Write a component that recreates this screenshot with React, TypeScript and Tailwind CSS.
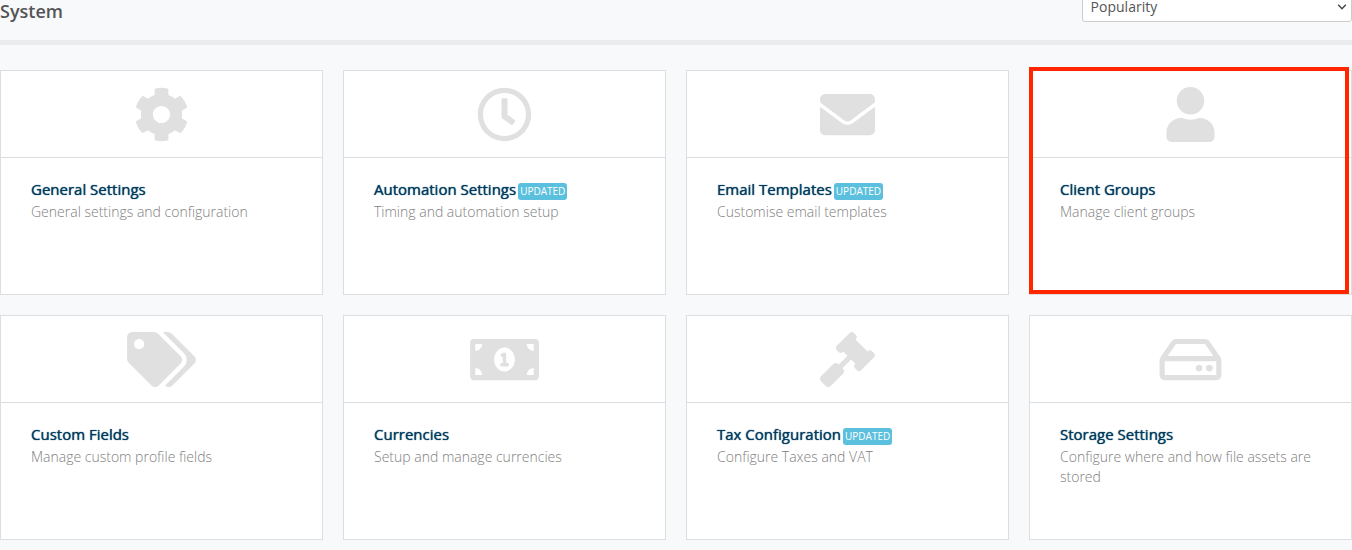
import { useState } from "react";
import type { IconType } from "react-icons";
import {
  FaCog,
  FaEnvelope,
  FaGavel,
  FaMoneyBillAlt,
  FaRegClock,
  FaRegHdd,
  FaTags,
  FaUser,
} from "react-icons/fa";

type Setting = {
  title: string;
  description: string;
  icon: IconType;
  updated?: boolean;
  highlighted?: boolean;
};

const SETTINGS: Setting[] = [
  { title: "General Settings", description: "General settings and configuration", icon: FaCog },
  {
    title: "Automation Settings",
    description: "Timing and automation setup",
    icon: FaRegClock,
    updated: true,
  },
  {
    title: "Email Templates",
    description: "Customise email templates",
    icon: FaEnvelope,
    updated: true,
  },
  {
    title: "Client Groups",
    description: "Manage client groups",
    icon: FaUser,
    highlighted: true,
  },
  { title: "Custom Fields", description: "Manage custom profile fields", icon: FaTags },
  { title: "Currencies", description: "Setup and manage currencies", icon: FaMoneyBillAlt },
  {
    title: "Tax Configuration",
    description: "Configure Taxes and VAT",
    icon: FaGavel,
    updated: true,
  },
  {
    title: "Storage Settings",
    description: "Configure where and how file assets are stored",
    icon: FaRegHdd,
  },
];

function SettingCard({ title, description, icon: Icon, updated, highlighted }: Setting) {
  return (
    <a
      href="#"
      className="relative flex min-h-[225px] flex-col border border-[#dddee0] bg-white"
    >
      <div className="flex h-[87px] items-center justify-center border-b border-[#dddee0] text-[#e0e0e0]">
        {/* wide enough for the 640-unit icons, the others centre themselves */}
        <Icon className="h-[55px] w-[69px]" aria-hidden="true" />
      </div>
      <div className="px-[30px] pt-5">
        <h2 className="flex items-center gap-0.5 pb-0.5 text-[15px] leading-[22px] whitespace-nowrap text-[#003a5d]">
          <span className="[text-shadow:0_0_1px_#003a5d]">{title}</span>
          {updated && (
            <span className="mt-1 rounded-[3px] bg-[#5bc0de] px-0.5 text-[10px] leading-[17px] text-white">
              UPDATED
            </span>
          )}
        </h2>
        <p className="text-sm leading-5 font-light text-[#808080]">{description}</p>
      </div>
      {highlighted && (
        <span className="pointer-events-none absolute -top-1 right-0.5 bottom-0 -left-px border-4 border-[#ff2600]" />
      )}
    </a>
  );
}

export default function App() {
  const [sort, setSort] = useState("popularity");

  return (
    <div className="min-h-screen overflow-hidden bg-[#f8f9fb] font-['Open_Sans',sans-serif]">
      <header className="flex h-[45px] items-start justify-between border-b-[5px] border-[#ebecee]">
        <h1 className="text-lg leading-[22px] font-semibold text-[#555555]">System</h1>
        <div className="relative -mt-2 w-1/5">
          <select
            aria-label="Sort by"
            value={sort}
            onChange={(e) => setSort(e.target.value)}
            className="h-[30px] w-full appearance-none rounded-[3px] border border-[#cccccc] bg-white px-2 text-sm text-[#555555]"
          >
            <option value="popularity">Popularity</option>
            <option value="alphabetical">Alphabetical</option>
          </select>
          <svg
            viewBox="0 0 10 6"
            className="pointer-events-none absolute top-3 right-[5px] h-1.5 w-2.5"
            fill="none"
            stroke="#444444"
            strokeWidth="1.4"
            aria-hidden="true"
          >
            <path d="M1.2 0.8 5 4.8 8.8 0.8" />
          </svg>
        </div>
      </header>

      <main className="grid grid-cols-4 gap-5 pt-[25px] pb-2.5">
        {SETTINGS.map((setting) => (
          <SettingCard key={setting.title} {...setting} />
        ))}
      </main>
    </div>
  );
}
